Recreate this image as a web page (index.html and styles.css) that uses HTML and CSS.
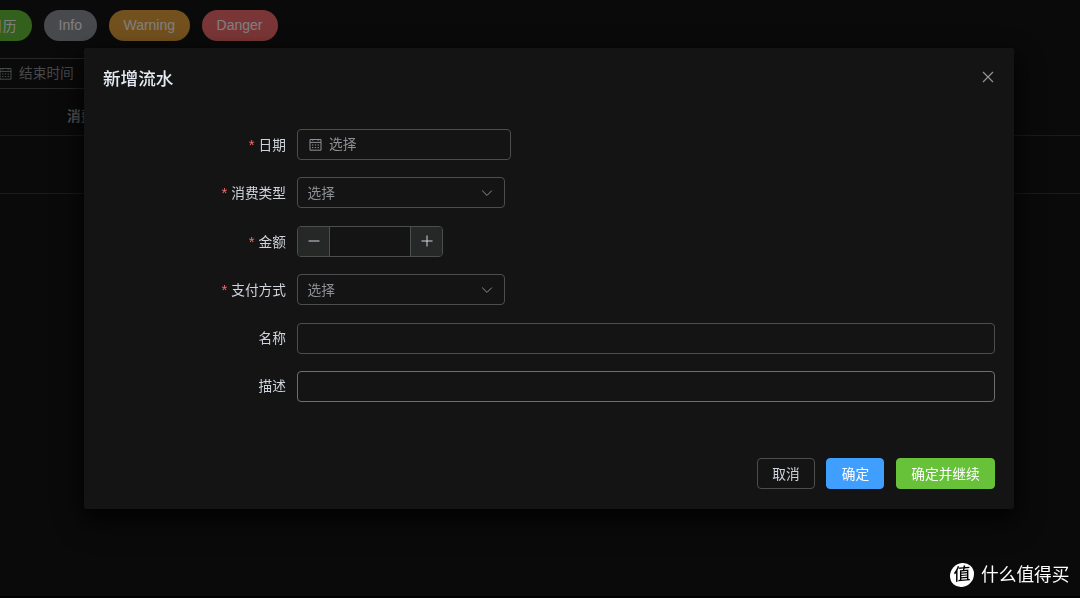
FILE: index.html
```html
<!DOCTYPE html>
<html lang="zh-CN">
<head>
  <meta charset="UTF-8">
  <meta name="viewport" content="width=device-width, initial-scale=1.0">
  <title>新增流水</title>
  <link rel="stylesheet" href="styles.css">
</head>
<body>
  <svg class="sprite">
    <symbol id="calendar" viewBox="0 0 13 13">
      <path d="M1 1.5h11v10.7H1zM1 4.4h11M3.8 1v1.8M9.2 1v1.8" />
      <path d="M3 7h1.4M5.8 7h1.4M8.6 7H10M3 9.6h1.4M5.8 9.6h1.4M8.6 9.6H10" />
    </symbol>
    <symbol id="arrow" viewBox="0 0 14 14">
      <path d="M2.2 4.6 7 9.4l4.8-4.8" />
    </symbol>
  </svg>

  <!-- Página de fondo -->
  <main class="page">
    <div class="toolbar">
      <button class="pill success">日历</button>
      <button class="pill info">Info</button>
      <button class="pill warning">Warning</button>
      <button class="pill danger">Danger</button>
    </div>
    <div class="filter">
      <svg class="icon"><use href="#calendar" /></svg>
      <span>结束时间</span>
    </div>
    <div class="table-head">消费类型</div>
    <div class="table-body"></div>
  </main>

  <div class="overlay">
    <div class="dialog">
      <header class="dialog-header">
        <h2>新增流水</h2>
        <svg class="close" viewBox="0 0 12 12"><path d="M1 1l10 10M11 1 1 11" /></svg>
      </header>

      <form class="form">
        <div class="row">
          <label class="required">日期</label>
          <div class="field date">
            <svg class="icon"><use href="#calendar" /></svg>
            <span>选择</span>
          </div>
        </div>
        <div class="row">
          <label class="required">消费类型</label>
          <div class="field select">
            <span>选择</span>
            <svg class="arrow"><use href="#arrow" /></svg>
          </div>
        </div>
        <div class="row">
          <label class="required">金额</label>
          <div class="field number">
            <span class="step minus"><svg viewBox="0 0 12 12"><path d="M.5 6h11" /></svg></span>
            <span class="step plus"><svg viewBox="0 0 12 12"><path d="M.5 6h11M6 .5v11" /></svg></span>
          </div>
        </div>
        <div class="row">
          <label class="required">支付方式</label>
          <div class="field select">
            <span>选择</span>
            <svg class="arrow"><use href="#arrow" /></svg>
          </div>
        </div>
        <div class="row">
          <label>名称</label>
          <div class="field text"></div>
        </div>
        <div class="row">
          <label>描述</label>
          <div class="field text hover"></div>
        </div>
      </form>

      <footer class="dialog-footer">
        <button type="button" class="btn">取消</button>
        <button type="button" class="btn primary">确定</button>
        <button type="button" class="btn success">确定并继续</button>
      </footer>
    </div>
  </div>

  <div class="brand">
    <span class="brand-logo">值</span>
    <span>什么值得买</span>
  </div>
</body>
</html>
```

FILE: styles.css
```css
* {
  box-sizing: border-box;
}

body {
  margin: 0;
  height: 598px;
  overflow: hidden;
  background: #030203;
  color: #cfd3dc;
  font-family: "Liberation Sans", "Noto Sans CJK SC", sans-serif;
  font-size: 13.7px;
}

button {
  font-family: inherit;
  font-size: inherit;
}

svg {
  fill: none;
  stroke: currentColor;
}

.sprite {
  display: none;
}

.icon {
  width: 13px;
  height: 13px;
  stroke-width: 1;
}

/* Fondo */
.page {
  height: 596px;
  overflow: hidden;
  background: #141414;
}

.toolbar {
  display: flex;
  gap: 11.5px;
  margin-left: -26.4px;
  padding-top: 9.5px;
}

.pill {
  height: 31.5px;
  padding: 0 15px 1px;
  border: 0;
  border-radius: 16px;
  color: #fff;
  white-space: nowrap;
}

.pill.success {
  width: 58.4px;
  background: #67c23a;
}

.pill.info {
  width: 53.5px;
  background: #909399;
}

.pill.warning {
  width: 81.5px;
  background: #e6a23c;
}

.pill.danger {
  width: 76px;
  background: #f56c6c;
}

.pill.info,
.pill.warning,
.pill.danger {
  padding: 0;
  font-size: 14px;
}

.filter {
  display: flex;
  align-items: center;
  gap: 7px;
  width: 200px;
  height: 31px;
  margin-top: 17px;
  padding-bottom: 1px;
  border: 1px solid #4c4d4f;
  border-width: 1px 0;
  color: #8d9095;
}

.filter span,
.field > span:not(.step) {
  margin-top: -2px;
}

.filter .icon {
  margin-left: -1px;
}

.table-head {
  height: 47px;
  padding: 9px 0 0 67px;
  border-bottom: 1px solid #363637;
  color: #a3a6ad;
  font-weight: bold;
  line-height: 38px;
}

.table-body {
  height: 58px;
  border-bottom: 1px solid #363637;
}

/* Ventana modal */
.overlay {
  position: fixed;
  top: 0;
  left: 0;
  width: 100%;
  height: 596px;
  overflow: hidden;
  background: rgba(0, 0, 0, 0.5);
}

.dialog {
  width: 930px;
  height: 461px;
  margin: 47.6px 0 0 84px;
  padding: 19px;
  border-radius: 2px;
  background: #141414;
  box-shadow: 0 12px 32px 4px rgba(0, 0, 0, 0.36), 0 8px 20px rgba(0, 0, 0, 0.72);
}

.dialog-header {
  display: flex;
  align-items: center;
  justify-content: space-between;
  height: 24px;
}

.dialog-header h2 {
  margin: -3px 0 0;
  color: #e5eaf3;
  font-size: 17.6px;
  font-weight: 500;
}

.close {
  width: 12px;
  height: 12px;
  margin: 0 1px 3px 0;
  color: #909399;
  stroke-width: 1.2;
}

.form {
  display: flex;
  flex-direction: column;
  gap: 17.45px;
  margin-top: 38.4px;
}

.row {
  display: flex;
  height: 31px;
}

.row label {
  width: 194px;
  padding-right: 11px;
  line-height: 31px;
  text-align: right;
}

.row .required::before {
  content: "*";
  margin-right: 4px;
  color: #f56c6c;
  font-size: 15px;
}

.field {
  display: flex;
  align-items: center;
  border: 1px solid #4c4d4f;
  border-radius: 4px;
  color: #8d9095;
}

.date {
  width: 213.5px;
  padding-left: 10.5px;
  gap: 7.5px;
}

.select {
  width: 207.5px;
  padding: 0 9.5px;
  justify-content: space-between;
}

.arrow {
  width: 14px;
  height: 14px;
}

.number {
  width: 146px;
  justify-content: space-between;
  overflow: hidden;
}

.step {
  display: flex;
  align-items: center;
  justify-content: center;
  width: 32px;
  height: 100%;
  background: #262727;
  color: #cfd3dc;
}

.step svg {
  width: 12px;
  height: 12px;
}

.minus {
  border-right: 1px solid #4c4d4f;
}

.plus {
  border-left: 1px solid #4c4d4f;
}

.text {
  flex: 1;
}

.hover {
  border-color: #6c6e72;
}

.dialog-footer {
  display: flex;
  justify-content: flex-end;
  gap: 11.5px;
  margin-top: 56px;
}

.btn {
  height: 31px;
  padding: 0 14.3px 2px;
  border: 1px solid #4c4d4f;
  border-radius: 4px;
  background: transparent;
  color: #cfd3dc;
  white-space: nowrap;
}

.btn.primary {
  border-color: #409eff;
  background: #409eff;
  color: #fff;
}

.btn.success {
  border-color: #67c23a;
  background: #67c23a;
  color: #fff;
}

/* Marca en la esquina inferior derecha */
.brand {
  position: fixed;
  right: 10.5px;
  bottom: 11px;
  display: flex;
  align-items: center;
  gap: 7px;
  color: #fff;
  font-size: 17.7px;
  line-height: 24px;
}

.brand-logo {
  width: 24px;
  height: 24px;
  border-radius: 50%;
  background: #fff;
  color: #000;
  font-size: 17px;
  font-weight: 500;
  line-height: 24px;
  text-align: center;
  transform: skewY(-5deg);
}
```
